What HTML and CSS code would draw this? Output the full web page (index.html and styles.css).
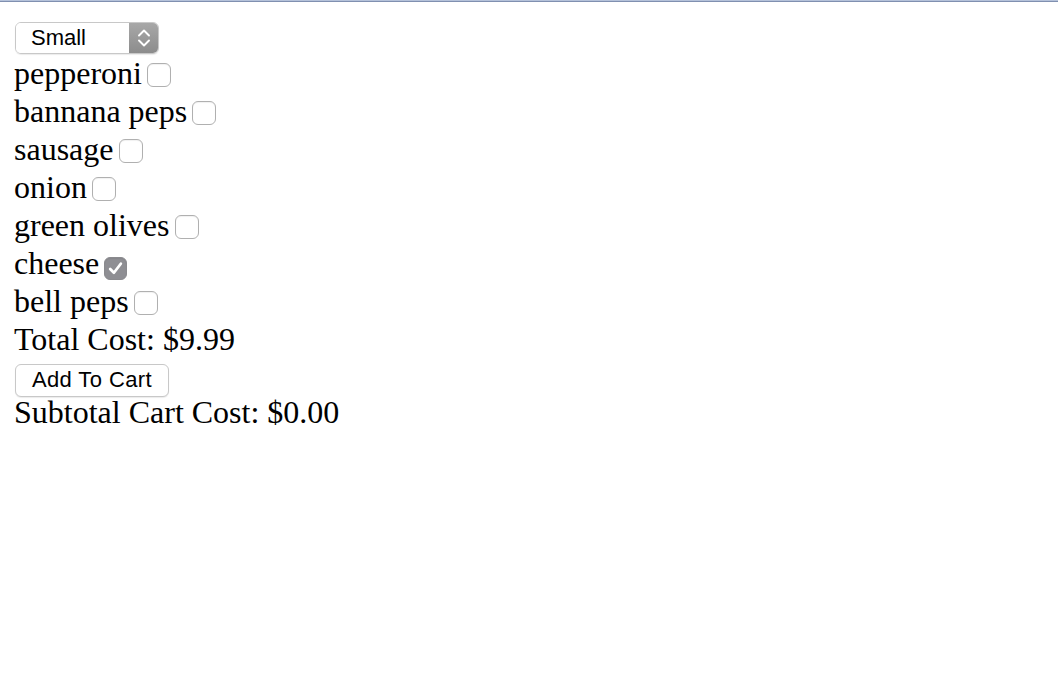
FILE: index.html
```html
<!DOCTYPE html>
<html>
<head>
<meta charset="utf-8">
<link rel="stylesheet" href="styles.css">
</head>
<body>
<div class="topline"></div>
<div class="page">
  <div class="select">
    <span class="select-label">Small</span>
    <span class="select-arrows">
      <svg width="16" height="24" viewBox="0 0 16 24"><path d="M3 9.5 L8 4.5 L13 9.5 M3 14.5 L8 19.5 L13 14.5" fill="none" stroke="#fff" stroke-width="1.9" stroke-linecap="round" stroke-linejoin="round"/></svg>
    </span>
  </div>
  <div class="row">pepperoni<span class="cb"></span></div>
  <div class="row">bannana peps<span class="cb"></span></div>
  <div class="row">sausage<span class="cb"></span></div>
  <div class="row">onion<span class="cb"></span></div>
  <div class="row">green olives<span class="cb"></span></div>
  <div class="row">cheese<span class="cb checked"><svg width="17" height="17" viewBox="0 0 16 16"><path d="M3 8.5 L6.5 12 L13 3.5" fill="none" stroke="#fff" stroke-width="2.6" stroke-linecap="round" stroke-linejoin="round"/></svg></span></div>
  <div class="row">bell peps<span class="cb"></span></div>
  <div class="row">Total Cost: $9.99</div>
  <div class="btn-row"><span class="btn">Add To Cart</span></div>
  <div class="row">Subtotal Cart Cost: $0.00</div>
</div>
</body>
</html>
```
FILE: styles.css
```css
html, body {
  margin: 0;
  padding: 0;
  background: #fff;
}
.topline {
  height: 0;
  border-top: 1px solid #b5c2da;
  border-bottom: 1px solid #8090b0;
}
.page {
  padding: 20px 0 0 14px;
  font-family: "Liberation Serif", "Times New Roman", serif;
  font-size: 32px;
  color: #000;
}
.select {
  margin-left: 1px;
  width: 144px;
  height: 32px;
  box-sizing: border-box;
  border: 1px solid #c8c8c8;
  border-radius: 6px;
  display: flex;
  align-items: stretch;
  overflow: hidden;
  font-family: "Liberation Sans", Arial, sans-serif;
  font-size: 22px;
  box-shadow: 0 1px 1px rgba(0,0,0,0.08);
}
.select-label {
  flex: 1;
  display: flex;
  align-items: center;
  padding-left: 15px;
  background: #fff;
}
.select-arrows {
  width: 29px;
  display: flex;
  align-items: center;
  justify-content: center;
  background: linear-gradient(#a8a8a8, #8c8c8c);
}
.row {
  line-height: 38px;
  height: 38px;
  white-space: nowrap;
}
.cb {
  display: inline-block;
  width: 24px;
  height: 24px;
  box-sizing: border-box;
  border: 1px solid #b0b0b0;
  border-radius: 6px;
  background: #fff;
  margin-left: 5px;
  vertical-align: -3px;
  box-shadow: inset 0 1px 1px rgba(0,0,0,0.06);
}
.cb.checked {
  background: #8e8e93;
  border-color: #8a8a8e;
  display: inline-flex;
  align-items: center;
  justify-content: center;
  width: 23px;
  height: 23px;
}
.btn-row {
  height: 35px;
}
.btn {
  display: inline-flex;
  align-items: center;
  justify-content: center;
  margin: 3px 0 0 1px;
  width: 154px;
  height: 33px;
  box-sizing: border-box;
  border: 1px solid #c8c8c8;
  border-radius: 6px;
  background: #fff;
  font-family: "Liberation Sans", Arial, sans-serif;
  font-size: 22px;
  letter-spacing: 0.4px;
  box-shadow: 0 1px 1px rgba(0,0,0,0.08);
}
```
